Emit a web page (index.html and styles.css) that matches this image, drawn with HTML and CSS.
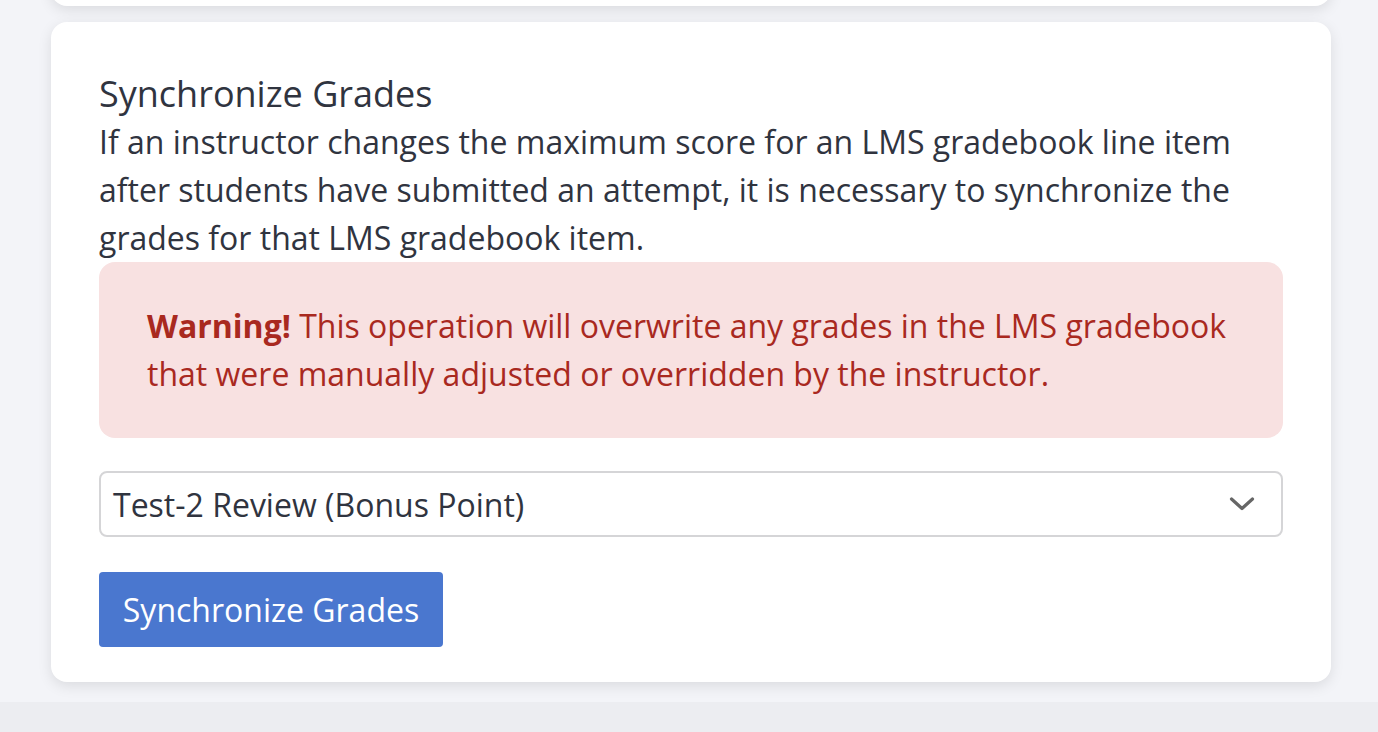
FILE: index.html
```html
<!DOCTYPE html>
<html lang="en">
<head>
<meta charset="utf-8">
<title>Synchronize Grades</title>
<link rel="stylesheet" href="styles.css">
</head>
<body>
<div class="page">
  <div class="card card-prev"></div>
  <div class="card card-main">
    <h2 class="title">Synchronize Grades</h2>
    <p class="desc">If an instructor changes the maximum score for an LMS gradebook line item after students have submitted an attempt, it is necessary to synchronize the grades for that LMS gradebook item.</p>
    <div class="alert"><strong>Warning!</strong> This operation will overwrite any grades in the LMS gradebook that were manually adjusted or overridden by the instructor.</div>
    <div class="select">
      <span class="select-text">Test-2 Review (Bonus Point)</span>
      <svg class="chevron" width="26" height="16" viewBox="0 0 26 16" aria-hidden="true"><path d="M2.5 3 L13 12.5 L23.5 3" fill="none" stroke="#666" stroke-width="3.2" stroke-linecap="round" stroke-linejoin="round"/></svg>
    </div>
    <button class="btn">Synchronize Grades</button>
  </div>
</div>
<div class="footer-strip"></div>
</body>
</html>
```

FILE: styles.css
```css
html, body {
  margin: 0;
  padding: 0;
}
body {
  background: #f3f4f8;
  font-family: "Open Sans", "Noto Sans", sans-serif;
  color: #30343f;
  height: 732px;
  overflow: hidden;
  display: flex;
  flex-direction: column;
}
.page {
  padding: 0 47px 0 51px;
  display: flex;
  flex-direction: column;
  gap: 16px;
  height: 702px;
  box-sizing: border-box;
  flex-shrink: 0;
}
.footer-strip {
  flex: 1;
  background: #ecedf1;
}
.card {
  background: #fff;
  border-radius: 16px;
  box-shadow: 0 4px 14px rgba(0, 0, 0, 0.10);
  width: 1280px;
  flex-shrink: 0;
}
.card-prev {
  height: 40px;
  margin-top: -34px;
}
.card-main {
  padding: 48px 48px 35px;
  box-sizing: border-box;
  display: flex;
  flex-direction: column;
}
.title {
  margin: 0;
  font-size: 36px;
  font-weight: 400;
  line-height: 48px;
  color: #30343f;
}
.desc {
  margin: 0;
  font-size: 32px;
  line-height: 48px;
  color: #30343f;
}
.alert {
  margin-top: 0;
  background: #f8e1e1;
  color: #a9291f;
  border-radius: 16px;
  padding: 40px 48px;
  font-size: 32px;
  line-height: 48px;
}
.alert strong {
  font-weight: 700;
}
.select {
  margin-top: 33px;
  height: 66px;
  box-sizing: border-box;
  border: 2px solid #d5d5d7;
  border-radius: 8px;
  display: flex;
  align-items: center;
  justify-content: space-between;
  padding: 0 26px 0 12px;
}
.select-text {
  font-size: 32px;
  color: #30343f;
}
.chevron {
  display: block;
}
.btn {
  align-self: flex-start;
  margin-top: 35px;
  height: 75px;
  width: 344px;
  border: none;
  border-radius: 4px;
  background: #4a77cf;
  color: #fff;
  font-family: "Open Sans", "Noto Sans", sans-serif;
  font-size: 32px;
  padding: 0;
}
```
